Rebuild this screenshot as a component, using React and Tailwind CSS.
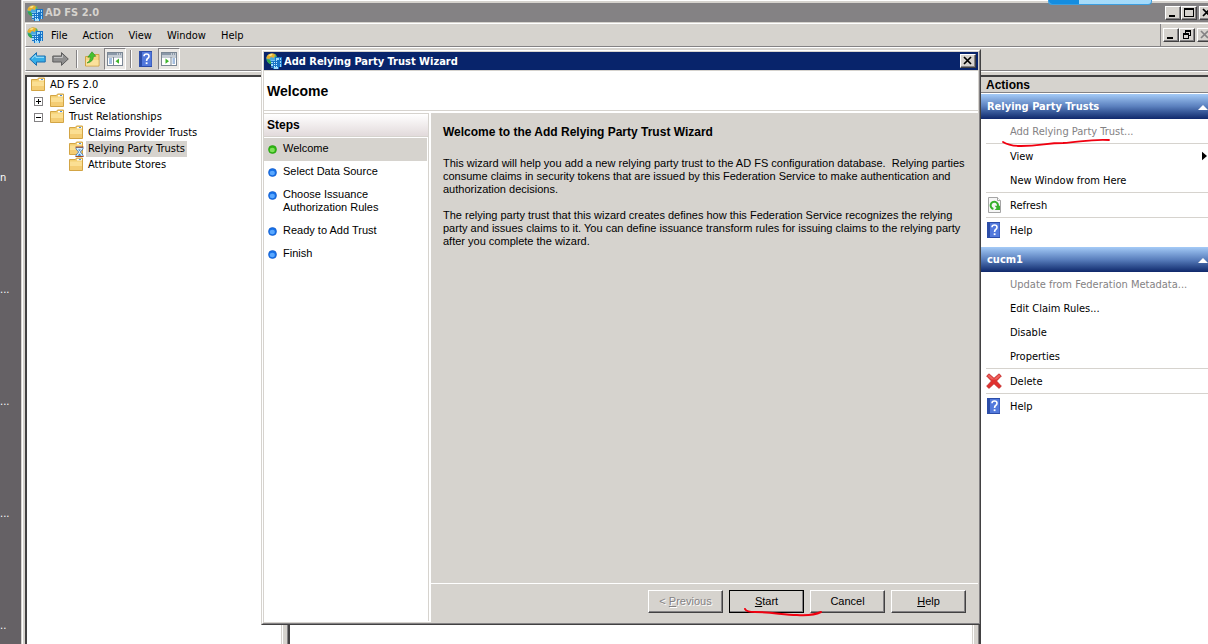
import React from "react";

const UI = "font-['DejaVu_Sans_Condensed','DejaVu_Sans',sans-serif]";
const RAISED =
  "border border-t-white border-l-white border-r-[#424142] border-b-[#424142] bg-[#d6d3ce] shadow-[inset_-1px_-1px_0_#848284]";

function AppIcon() {
  return (
    <svg viewBox="0 0 16 16" className="size-4 shrink-0" aria-hidden="true">
      <circle cx="5.6" cy="5.6" r="5.2" fill="#4aa9dc" />
      <path d="M.4 4.4 Q1.6 .8 6 .3 Q8.5 .3 10 2 L8 4 L8 5 L5 4 L3.4 6 L.6 5.6 Z" fill="#eab02c" />
      <path d="M2.4 2.4 Q4 .8 6.8 1.2 L5 3 Z" fill="#fbe48a" />
      <path d="M.6 6.2 L3.4 6.6 L5.2 9 L5 11.2 Q1.2 10.4 .6 6.2 Z" fill="#35a84a" />
      <path d="M8.6 .8 Q10.8 2 11 4.6 L9 4.4 Z" fill="#57b85a" />
      <path d="M5 7.5 h4 v-3.5 h7 v10 h-4 v2 H8 v-1.5 H5 Z" fill="#9fdcfa" />
      <path d="M5 8h4V4h7v1h-6v3h3v8h-1v-2H8v2H7v-2H5v-1h2v-2H5v-1h2V9H5z M13 5h1v9h-1z M11 7h5v1h-5z M13 10h3v1h-3z M15 4h1v10h-1z" fill="#1874c8" />
      <path d="M8 9h1v1H8z M10 9h1v1h-1z M8 11h1v1H8z M10 11h1v1h-1z M8 13h1v1H8z M10 13h1v1h-1z" fill="#c4efff" />
    </svg>
  );
}

function Folder({ busy }) {
  return (
    <svg viewBox="0 0 16 16" className="size-4 shrink-0" aria-hidden="true">
      <path d="M1.5 2.5 h6 l1 -1.5 h6 v12.5 h-13 Z" fill="#f3cf72" stroke="#d3a545" />
      <path d="M9 2h5v1.5H9z" fill="#fff" />
      <path d="M11 2h2v1h-2z" fill="#4c8fdc" />
      <path d="M2 4.5 h12 v8.5 H2 Z" fill="#fbdf93" />
      <path d="M2 9h12v4H2z" fill="#f4cd74" />
      {busy && (
        <g>
          <path d="M8 6.5 H15 V8 L12.3 11 L15 14 V15.5 H8 V14 L10.7 11 L8 8 Z" fill="#d6efff" stroke="#3a6fb0" strokeWidth=".8" />
          <path d="M7.5 6 h8 M7.5 15.5 h8" stroke="#a84a1c" strokeWidth="1.2" />
          <path d="M9.5 14.8 L11.5 12.5 L13.5 14.8 Z M10 8.5h3l-1.5 1.6z" fill="#2b7fd0" />
        </g>
      )}
    </svg>
  );
}

function HelpIcon() {
  return (
    <svg viewBox="0 0 14 16" className="h-4 w-3.5 shrink-0" aria-hidden="true">
      <rect width="13" height="16" fill="#2c4da8" />
      <rect x="3" y="1" width="9.5" height="14" fill="#5279dc" />
      <path d="M5 5.2 Q5 3 7.5 3 Q10 3 10 5.2 Q10 6.6 8.6 7.5 Q7.6 8.2 7.6 10" fill="none" stroke="#fff" strokeWidth="1.6" />
      <rect x="6.7" y="11.3" width="1.8" height="1.8" fill="#fff" />
    </svg>
  );
}

function RefreshIcon() {
  return (
    <svg viewBox="0 0 14 16" className="h-4 w-3.5 shrink-0" aria-hidden="true">
      <path d="M1.5 .5 H10.5 L13.5 3.5 V15.5 H1.5 Z" fill="#f6f6f6" stroke="#a5a5a5" />
      <path d="M10.5 .5 V3.5 H13.5" fill="#fff" stroke="#a5a5a5" />
      <path d="M6.4 12 A3.7 3.7 0 1 1 10.8 9.6" fill="none" stroke="#36b02c" strokeWidth="2" />
      <path d="M7.6 8.8 H13 V13 H7.6 L9.6 11 Z" fill="#36b02c" />
    </svg>
  );
}

function DeleteIcon() {
  return (
    <svg viewBox="0 0 16 16" className="-mx-px size-4 shrink-0" aria-hidden="true">
      <path d="M3 .8 L8 5.2 L13 .8 L15.4 3 L10.6 8 L15.4 13.2 L13 15.4 L8 10.8 L3 15.4 L.6 13.2 L5.4 8 L.6 3 Z" fill="#e0302e" stroke="#b92626" strokeWidth=".7" />
      <path d="M3 1.6 L8 6 L13 1.6 L14.4 3 L10.6 6.6 H5.4 L1.6 3 Z" fill="#ee625f" />
    </svg>
  );
}

function Arrow({ forward }) {
  return (
    <svg viewBox="0 0 17 16" className="h-4 w-[17px] shrink-0" aria-hidden="true">
      {forward ? (
        <g>
          <path d="M16.3 8 L9.5 1.6 V5 H.8 V11 H9.5 V14.4 Z" fill="#8f8f8f" stroke="#5d5d5d" />
          <path d="M2 6.5 H10.5 V4" fill="none" stroke="#c4c4c4" />
        </g>
      ) : (
        <g>
          <path d="M.7 8 L7.5 1.6 V5 H16.2 V11 H7.5 V14.4 Z" fill="#35aee8" stroke="#1b6cae" />
          <path d="M3 7.5 L6.8 4 V6.3 H15" fill="none" stroke="#a4e3fb" />
        </g>
      )}
    </svg>
  );
}

function UpFolder() {
  return (
    <svg viewBox="0 0 16 16" className="size-4 shrink-0" aria-hidden="true">
      <path d="M1.5 5.5 h6 l1.5 -2 h6 v11.5 h-13.5 Z" fill="#f6d581" stroke="#cfa246" />
      <path d="M2 9h12.5v5.5H2z" fill="#fbe19b" />
      <path d="M3 12 Q6.5 10.5 6.4 6 L3.8 6.2 L8 .8 L11.8 5.2 L9.4 5.6 Q9.4 11 3 12 Z" fill="#46c22f" stroke="#258d1c" strokeWidth=".6" />
    </svg>
  );
}

function PaneIcon({ right }) {
  return (
    <svg viewBox="0 0 16 14" className="h-3.5 w-4 shrink-0" aria-hidden="true">
      <rect x=".5" y=".5" width="15" height="13" fill="#fff" stroke="#7b8794" />
      <rect x="1" y="1" width="14" height="2.5" fill="#8a98a8" />
      <path d="M10 2h1M12 2h1M14 2h1" stroke="#fff" />
      <path d="M1 5h14" stroke="#8a98a8" />
      {right ? (
        <g>
          <path d="M10 5v8" stroke="#7b8794" />
          <path d="M4.5 6.6 L8 9.2 L4.5 11.8 Z" fill="#3fb52c" />
          <path d="M11.5 7h2.5M11.5 9h2.5M11.5 11h2.5" stroke="#4a7fc0" />
        </g>
      ) : (
        <g>
          <path d="M6.5 5v8" stroke="#7b8794" />
          <path d="M12 6.6 L8.5 9.2 L12 11.8 Z" fill="#3fb52c" />
          <path d="M2 7h3M2 9h3M2 11h3" stroke="#4a7fc0" />
        </g>
      )}
    </svg>
  );
}

function Glyph({ kind, color = "#000" }) {
  return (
    <svg viewBox="0 0 12 10" className="h-2.5 w-3 shrink-0" shapeRendering="crispEdges" aria-hidden="true">
      {kind === "min" && <path d="M2 7h6v2H2z" fill={color} />}
      {kind === "max" && <path d="M1 0h10v9H1z M2 2v6h8V2z" fillRule="evenodd" fill={color} />}
      {kind === "restore" && (
        <path d="M4 0h6v6H8v3H2V3h2z M5 2v1h3v2h1V2z M3 5v3h4V5z" fillRule="evenodd" fill={color} />
      )}
      {kind === "close" && <path d="M2 1 L9 8 M9 1 L2 8" stroke={color} strokeWidth="1.7" shapeRendering="auto" />}
    </svg>
  );
}

function CaptionButton({ kind, label, disabled }) {
  return (
    <button
      type="button"
      aria-label={label}
      disabled={disabled}
      className={`flex h-3.5 w-4 shrink-0 items-center justify-center ${RAISED}`}
    >
      <Glyph kind={kind} color={disabled ? "#848284" : "#000"} />
    </button>
  );
}

function Expander({ open }) {
  return (
    <svg viewBox="0 0 9 9" className="size-[9px] shrink-0" shapeRendering="crispEdges" aria-hidden="true">
      <rect x=".5" y=".5" width="8" height="8" fill="#fff" stroke="#848284" />
      <path d={open ? "M2 4h5v1H2z" : "M2 4h5v1H2z M4 2h1v5H4z"} fill="#000" />
    </svg>
  );
}

function TreeRow({ label, indent, expander, busy, selected }) {
  return (
    <li className={`flex h-4 items-center ${indent}`}>
      <span className="flex w-[15px] shrink-0 items-center">{expander && <Expander open={expander === "open"} />}</span>
      <Folder busy={busy} />
      <button type="button" className={`ml-0.5 h-4 px-0.5 leading-4 whitespace-nowrap ${selected ? "bg-[#d6d3ce]" : ""}`}>
        {label}
      </button>
    </li>
  );
}

function ActionHeader({ children }) {
  return (
    <h2 className="flex h-[25px] items-center justify-between bg-linear-to-b from-[#a5cbf7] via-[#5a7fbd] to-[#10286b] pt-0.5 pl-1.5 font-bold text-white">
      {children}
      <svg viewBox="0 0 10 5" className="h-[5px] w-2.5" aria-hidden="true">
        <path d="M0 5 L5 0 L10 5 Z" fill="#fff" />
      </svg>
    </h2>
  );
}

function ActionRow({ label, icon, disabled, submenu, line }) {
  return (
    <li className={`ml-[5px] ${line ? "border-b border-[#d6d3ce]" : ""}`}>
      <button
        type="button"
        disabled={disabled}
        className={`flex h-6 w-full items-center text-left ${disabled ? "text-[#848284]" : "text-black"}`}
      >
        <span className="flex w-6 shrink-0 items-center pl-px">{icon}</span>
        <span className="grow pt-0.5 whitespace-nowrap">{label}</span>
        {submenu && (
          <svg viewBox="0 0 6 10" className="mr-px h-2.5 w-[5px]" aria-hidden="true">
            <path d="M0 0 L6 5 L0 10 Z" fill="#000" />
          </svg>
        )}
      </button>
    </li>
  );
}

function Step({ children, current }) {
  return (
    <li className={`mr-px flex gap-1.5 pt-1 pb-1.5 pl-1 leading-[13px] ${current ? "bg-[#d6d3ce]" : ""}`}>
      <svg viewBox="0 0 9 9" className="mt-[3px] size-[9px] shrink-0" aria-hidden="true">
        <circle cx="4.5" cy="4.5" r="4" fill={current ? "#2eb512" : "#1671e8"} stroke={current ? "#279c10" : "#1458c4"} strokeWidth=".6" />
        <ellipse cx="4.3" cy="5" rx="2.6" ry="2.2" fill={current ? "#7ee05a" : "#5ba8ff"} />
      </svg>
      <span>{children}</span>
    </li>
  );
}

function DialogButton({ children, disabled, primary }) {
  return (
    <button
      type="button"
      disabled={disabled}
      className={`h-[23px] w-[75px] ${RAISED} ${primary ? "outline-1 -outline-offset-1 outline-black" : ""} ${
        disabled ? "text-[#848284] [text-shadow:1px_1px_0_#fff]" : "text-black"
      }`}
    >
      {children}
    </button>
  );
}

function Wizard() {
  return (
    <section
      role="dialog"
      aria-label="Add Relying Party Trust Wizard"
      className="absolute top-[49px] right-0 bottom-[19px] left-[239px] mr-[227px] flex flex-col border border-t-[#d6d3ce] border-r-[#424142] border-b-[#424142] border-l-[#d6d3ce] bg-[#d6d3ce] font-['Liberation_Sans',Arial,sans-serif]"
    >
      <div className="flex min-h-0 grow flex-col border border-t-white border-r-[#848284] border-b-[#848284] border-l-white p-px">
        <header className={`flex h-[18px] shrink-0 items-center bg-[#08246b] px-0.5 text-white ${UI}`}>
          <AppIcon />
          <h2 className="ml-0.5 grow pt-0.5 font-bold">Add Relying Party Trust Wizard</h2>
          <CaptionButton kind="close" label="Close wizard" />
        </header>
        <h3 className="mt-px flex h-10 shrink-0 items-center border-b border-[#d6d3ce] bg-white pt-0.5 pl-[3px] text-[14px] font-bold">
          Welcome
        </h3>
        <div className="flex min-h-0 grow bg-white pt-0.5">
          <nav aria-label="Steps" className="mb-px w-[165px] shrink-0 border-t border-r border-[#d6d3ce]">
            <h4 className="flex h-[23px] items-center border-b border-[#d6d3ce] bg-linear-to-b from-white to-[#e2dadb] pl-[3px] text-[12px] font-bold">
              Steps
            </h4>
            <ol className="mt-px">
              <Step current>Welcome</Step>
              <Step>Select Data Source</Step>
              <Step>
                Choose Issuance
                <br />
                Authorization Rules
              </Step>
              <Step>Ready to Add Trust</Step>
              <Step>Finish</Step>
            </ol>
          </nav>
          <div className="ml-0.5 flex min-w-0 grow flex-col bg-[#d6d3ce]">
            <div className="grow px-3 pt-[11px] leading-[13px]">
              <h4 className="text-[12px] leading-4 font-bold">Welcome to the Add Relying Party Trust Wizard</h4>
              <p className="mt-[17px]">
                This wizard will help you add a new relying party trust to the AD FS configuration database.&nbsp; Relying parties
                <br />
                consume claims in security tokens that are issued by this Federation Service to make authentication and
                <br />
                authorization decisions.
              </p>
              <p className="mt-[13px]">
                The relying party trust that this wizard creates defines how this Federation Service recognizes the relying
                <br />
                party and issues claims to it. You can define issuance transform rules for issuing claims to the relying party
                <br />
                after you complete the wizard.
              </p>
            </div>
            <footer className="relative flex justify-end gap-1.5 border-t border-white pt-1.5 pr-3 pb-[9px]">
              <DialogButton disabled>
                &lt; <u>P</u>revious
              </DialogButton>
              <DialogButton primary>
                <u>S</u>tart
              </DialogButton>
              <DialogButton>Cancel</DialogButton>
              <DialogButton>
                <u>H</u>elp
              </DialogButton>
              <svg viewBox="0 0 80 12" className="pointer-events-none absolute top-6 right-[155px] h-3 w-20" aria-hidden="true">
                <path d="M2 1 Q3 4 12 4 C30 4 40 7 54 7 Q70 8 78 4" fill="none" stroke="#f00010" strokeWidth="2" strokeLinecap="round" />
              </svg>
            </footer>
          </div>
        </div>
      </div>
    </section>
  );
}

function Splitter() {
  return (
    <div className="flex w-[9px] shrink-0 border-r-2 border-l border-r-[#424142] border-l-[#d6d3ce] bg-[#d6d3ce]">
      <span className="w-px bg-white" />
      <span className="grow" />
      <span className="w-px bg-[#848284]" />
    </div>
  );
}

export default function App() {
  return (
    <div className={`flex h-screen overflow-hidden bg-[#656165] text-[11px] text-black ${UI}`}>
      <ul className="w-[21px] shrink-0 overflow-hidden pt-[122px] text-white">
        <li className="flex h-28 items-center">n</li>
        <li className="flex h-28 items-center">...</li>
        <li className="flex h-28 items-center">...</li>
        <li className="flex h-28 items-center">...</li>
        <li className="flex h-28 items-center">..</li>
      </ul>

      <main className="relative flex min-w-0 grow flex-col overflow-hidden border-l border-[#d6d3ce] bg-[#d6d3ce]">
        <div className="flex min-h-0 grow flex-col border-t border-l border-white pt-0.5 pl-0.5">
          <header className="flex h-[19px] shrink-0 items-center bg-[#848284] pl-0.5 text-[#d6d3ce]">
            <AppIcon />
            <h1 className="ml-0.5 grow pt-0.5 font-bold">AD FS 2.0</h1>
            <div className="-mr-[7px] flex">
              <CaptionButton kind="min" label="Minimize" />
              <CaptionButton kind="max" label="Maximize" />
              <span className="w-0.5" />
              <CaptionButton kind="close" label="Close" />
            </div>
          </header>

          <nav aria-label="Menu" className="mt-px flex h-6 shrink-0 items-center border-t border-b border-l border-t-white border-b-[#848284] border-l-white pl-px">
            <AppIcon />
            <div className="ml-2 flex grow gap-[15px] pt-0.5">
              <button type="button">File</button>
              <button type="button">Action</button>
              <button type="button">View</button>
              <button type="button">Window</button>
              <button type="button">Help</button>
            </div>
            <div className="-mr-[5px] flex h-full items-center border-l border-[#848284] pl-0.5">
              <CaptionButton kind="min" label="Minimize child window" />
              <CaptionButton kind="restore" label="Restore child window" />
              <span className="w-0.5" />
              <CaptionButton kind="close" label="Close child window" disabled />
            </div>
          </nav>

          <div role="toolbar" aria-label="Tools" className="flex h-6 shrink-0 items-center border-t border-b border-l border-t-white border-b-[#848284] border-l-white pl-[3px]">
            <button type="button" aria-label="Back">
              <Arrow />
            </button>
            <button type="button" aria-label="Forward" disabled className="ml-1.5">
              <Arrow forward />
            </button>
            <span className="ml-[7px] h-[18px] w-0.5 border-l border-[#848284] bg-white" />
            <button type="button" aria-label="Up one level" className="ml-1.5">
              <UpFolder />
            </button>
            <button
              type="button"
              aria-label="Show or hide console tree"
              aria-pressed="true"
              className="ml-1 flex size-[22px] items-center justify-center border border-t-[#848284] border-r-white border-b-white border-l-[#848284] bg-[#ebe9e6]"
            >
              <PaneIcon />
            </button>
            <span className="ml-1 h-[18px] w-0.5 border-l border-[#848284] bg-white" />
            <button type="button" aria-label="Help" className="ml-[7px]">
              <HelpIcon />
            </button>
            <button
              type="button"
              aria-label="Show or hide action pane"
              aria-pressed="true"
              className="ml-[5px] flex size-[22px] items-center justify-center border border-t-[#848284] border-r-white border-b-white border-l-[#848284] bg-[#ebe9e6]"
            >
              <PaneIcon right />
            </button>
          </div>

          <div className="flex min-h-0 grow flex-col border-t border-white pt-[3px]">
            <div className="flex min-h-0 grow border-t-2 border-l-2 border-t-[#424142] border-l-[#424142] bg-white">
              <ul className="w-[254px] shrink-0">
                <TreeRow label="AD FS 2.0" indent="-ml-3.5 pl-0.5" />
                <TreeRow label="Service" indent="pl-[7px]" expander="closed" />
                <TreeRow label="Trust Relationships" indent="pl-[7px]" expander="open" />
                <TreeRow label="Claims Provider Trusts" indent="pl-[26px]" />
                <TreeRow label="Relying Party Trusts" indent="pl-[26px]" busy selected />
                <TreeRow label="Attribute Stores" indent="pl-[26px]" />
              </ul>
              <Splitter />
              <div className="grow" />
              <Splitter />
              <aside className="relative w-[227px] shrink-0">
                <h2 className="flex h-4 items-center border-b border-[#848284] bg-[#d6d3ce] pl-[5px] font-['Liberation_Sans',Arial,sans-serif] text-[12px] font-bold">
                  Actions
                </h2>
                <div className="pt-px">
                  <ActionHeader>Relying Party Trusts</ActionHeader>
                  <ul>
                    <ActionRow label="Add Relying Party Trust..." disabled line />
                    <ActionRow label="View" submenu />
                    <ActionRow label="New Window from Here" line />
                    <ActionRow label="Refresh" icon={<RefreshIcon />} line />
                    <ActionRow label="Help" icon={<HelpIcon />} />
                  </ul>
                </div>
                <div className="pt-[5px]">
                  <ActionHeader>cucm1</ActionHeader>
                  <ul>
                    <ActionRow label="Update from Federation Metadata..." disabled />
                    <ActionRow label="Edit Claim Rules..." />
                    <ActionRow label="Disable" />
                    <ActionRow label="Properties" line />
                    <ActionRow label="Delete" icon={<DeleteIcon />} line />
                    <ActionRow label="Help" icon={<HelpIcon />} />
                  </ul>
                </div>
                <svg viewBox="0 0 112 12" className="pointer-events-none absolute top-[60px] left-5 h-3 w-28" aria-hidden="true">
                  <path d="M2 5 Q8 9 20 9 C40 9 45 6 62 6 C80 5 88 2 108 3" fill="none" stroke="#f00010" strokeWidth="1.8" strokeLinecap="round" />
                </svg>
              </aside>
            </div>
          </div>
        </div>

        <div className="absolute top-0 right-14 h-[5px] w-[104px] overflow-hidden rounded-b border border-t-0 border-[#3d9fe0] bg-linear-to-r from-[#a8dcf8] to-[#a3dafb]">
          <div className="h-full w-[30px] bg-[#148de0]" />
        </div>
        <Wizard />
      </main>
    </div>
  );
}
